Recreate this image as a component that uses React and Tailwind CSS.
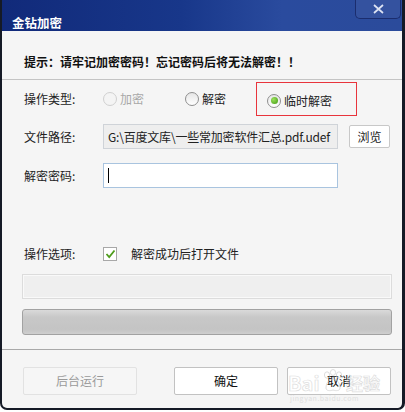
import React from "react";

const font = { fontFamily: '"Noto Sans CJK SC", "Noto Sans", sans-serif' };

function Radio({ checked, disabled }) {
  return (
    <span
      className={`relative inline-flex h-[14px] w-[14px] shrink-0 items-center justify-center rounded-full border ${
        disabled ? "border-[#d0d0d0] bg-[#f4f4f4]" : "border-[#8f8f8f] bg-gradient-to-b from-[#e6e6e6] to-[#ffffff]"
      }`}
    >
      {checked && <span className="h-[7px] w-[7px] rounded-full bg-[radial-gradient(circle_at_35%_35%,#9be05a,#3f9a12)]" />}
    </span>
  );
}

export default function App() {
  return (
    <div className="h-[412px] w-[405px] bg-white" style={font}>
      <div className="relative flex h-[410px] w-[405px] flex-col overflow-hidden rounded-b-[7px] border-x-2 border-b-2 border-r-[3px] border-[#151a26] bg-[#f5f5f5]">
        {/* title bar */}
        <div className="relative h-[31px] shrink-0 bg-[linear-gradient(90deg,#112a7a_0%,#18378a_45%,#2a4b9e_70%,#2b4b9b_100%)] pl-[10px] pt-[9px]">
          <span className="text-[12.5px] font-bold leading-[16px] text-white">金钻加密</span>
          <div className="absolute right-[1px] top-0 flex h-[19px] w-[46px] items-center justify-center rounded-b-[5px] border-x border-b border-[#1b2d6e] bg-[#34529f]">
            <svg width="11" height="10" viewBox="0 0 11 10">
              <path d="M1 1 L10 9 M10 1 L1 9" stroke="#dde3f3" strokeWidth="1.7" />
            </svg>
          </div>
        </div>

        {/* hint */}
        <div className="h-[48px] shrink-0 pl-[22px] pt-[23px] text-[12px] font-bold leading-[16px] text-[#111]">
          提示：请牢记加密密码！忘记密码后将无法解密！！
        </div>
        <div className="h-px shrink-0 bg-[#c4c4c4]" />

        {/* row 1 */}
        <div className="mt-[2px] flex h-[34px] shrink-0 items-center pl-[22px] text-[12px] text-[#222]">
          <span className="w-[79px]">操作类型:</span>
          <div className="flex w-[82px] items-center gap-[3px]">
            <Radio disabled />
            <span className="text-[#a8a8a8]">加密</span>
          </div>
          <div className="flex w-[71px] items-center gap-[3px]">
            <Radio />
            <span>解密</span>
          </div>
          <div className="flex h-[34px] w-[101px] items-center gap-[3px] border border-[#e8343c] pl-[10px] pt-[3px]">
            <Radio checked />
            <span>临时解密</span>
          </div>
        </div>

        {/* row 2 */}
        <div className="mt-[8px] flex h-[25px] shrink-0 items-center pl-[22px] text-[12px] text-[#222]">
          <span className="w-[79px]">文件路径:</span>
          <div className="flex h-[25px] w-[235px] items-center border border-[#cfd3d8] bg-[#eeeeee] pl-[4px] tracking-[-0.2px] text-[#222]">
            G:\百度文库\一些常加密软件汇总.pdf.udef
          </div>
          <div className="ml-[11px] flex h-[23px] w-[41px] items-center justify-center rounded-[2px] border border-[#c8c8c8] bg-white">
            浏览
          </div>
        </div>

        {/* row 3 */}
        <div className="mt-[14px] flex h-[25px] shrink-0 items-center pl-[22px] text-[12px] text-[#222]">
          <span className="w-[79px]">解密密码:</span>
          <div className="flex h-[25px] w-[235px] items-center border border-[#a9c4df] bg-white pl-[4px]">
            <span className="h-[15px] w-px bg-black" />
          </div>
        </div>

        {/* row 4 */}
        <div className="mt-[59px] flex h-[14px] shrink-0 items-center pl-[22px] text-[12px] text-[#222]">
          <span className="w-[79px]">操作选项:</span>
          <span className="flex h-[14px] w-[14px] items-center justify-center border border-[#a8a8a8] bg-white">
            <svg width="11" height="10" viewBox="0 0 11 10">
              <path d="M1.5 5 L4.2 8 L9.5 1.5" stroke="#4f9d1c" strokeWidth="1.8" fill="none" />
            </svg>
          </span>
          <span className="ml-[14px]">解密成功后打开文件</span>
        </div>

        {/* progress 1 */}
        <div className="ml-[20px] mt-[13px] h-[25px] w-[370px] shrink-0 border border-[#dcdcdc] bg-[#efefef] shadow-[inset_0_0_0_1px_#f9f9f9]" />
        {/* progress 2 */}
        <div className="ml-[20px] mt-[10px] h-[26px] w-[370px] shrink-0 rounded-[3px] border border-[#a2a2a2] bg-[linear-gradient(180deg,#dadada_0%,#c8c8c8_30%,#c4c4c4_80%,#cfcfcf_100%)]" />

        <div className="mt-[14px] h-px shrink-0 bg-[#a9a9a9]" />

        {/* buttons */}
        <div className="mt-[17px] flex h-[28px] shrink-0 items-center text-[12px]">
          <div className="ml-[21px] flex h-[28px] w-[114px] items-center justify-center rounded-[2px] border border-[#e2e2e2] bg-[#f6f6f6] text-[#9a9a9a]">
            后台运行
          </div>
          <div className="ml-[37px] flex h-[28px] w-[104px] items-center justify-center rounded-[2px] border border-[#c2c2c2] bg-white text-[#111]">
            确定
          </div>
          <div className="ml-[9px] flex h-[28px] w-[104px] items-center justify-center rounded-[2px] border border-[#c2c2c2] bg-white text-[#111]">
            取消
          </div>
        </div>

        {/* watermark */}
        <div className="pointer-events-none absolute left-[286px] top-[371px] h-[30px] w-[92px] opacity-60">
          <span className="absolute left-0 top-[1px] text-[20px] font-bold leading-[22px] text-white/40 [-webkit-text-stroke:0.7px_#c8c8c8]">Bai</span>
          <svg className="absolute left-[34px] top-[-2px]" width="22" height="24" viewBox="0 0 22 24">
            <g fill="none" stroke="#c8c8c8" strokeWidth="1">
              <ellipse cx="5" cy="6" rx="2.6" ry="3.2" />
              <ellipse cx="11" cy="3.5" rx="2.6" ry="3" />
              <ellipse cx="17" cy="6" rx="2.6" ry="3.2" />
              <path d="M4 19 C4 13 8 10 11 10 C14 10 18 13 18 19 C18 22 14 22 11 21 C8 22 4 22 4 19 Z" />
            </g>
          </svg>
          <span className="absolute left-[58px] top-[2px] text-[17px] font-bold leading-[20px] text-white/40 [-webkit-text-stroke:0.7px_#c8c8c8]">经验</span>
          <span className="absolute left-[2px] top-[23px] text-[7px] leading-[8px] tracking-[0.5px] text-[#d0d0d0]">jingyan.baidu.com</span>
        </div>
      </div>
    </div>
  );
}
